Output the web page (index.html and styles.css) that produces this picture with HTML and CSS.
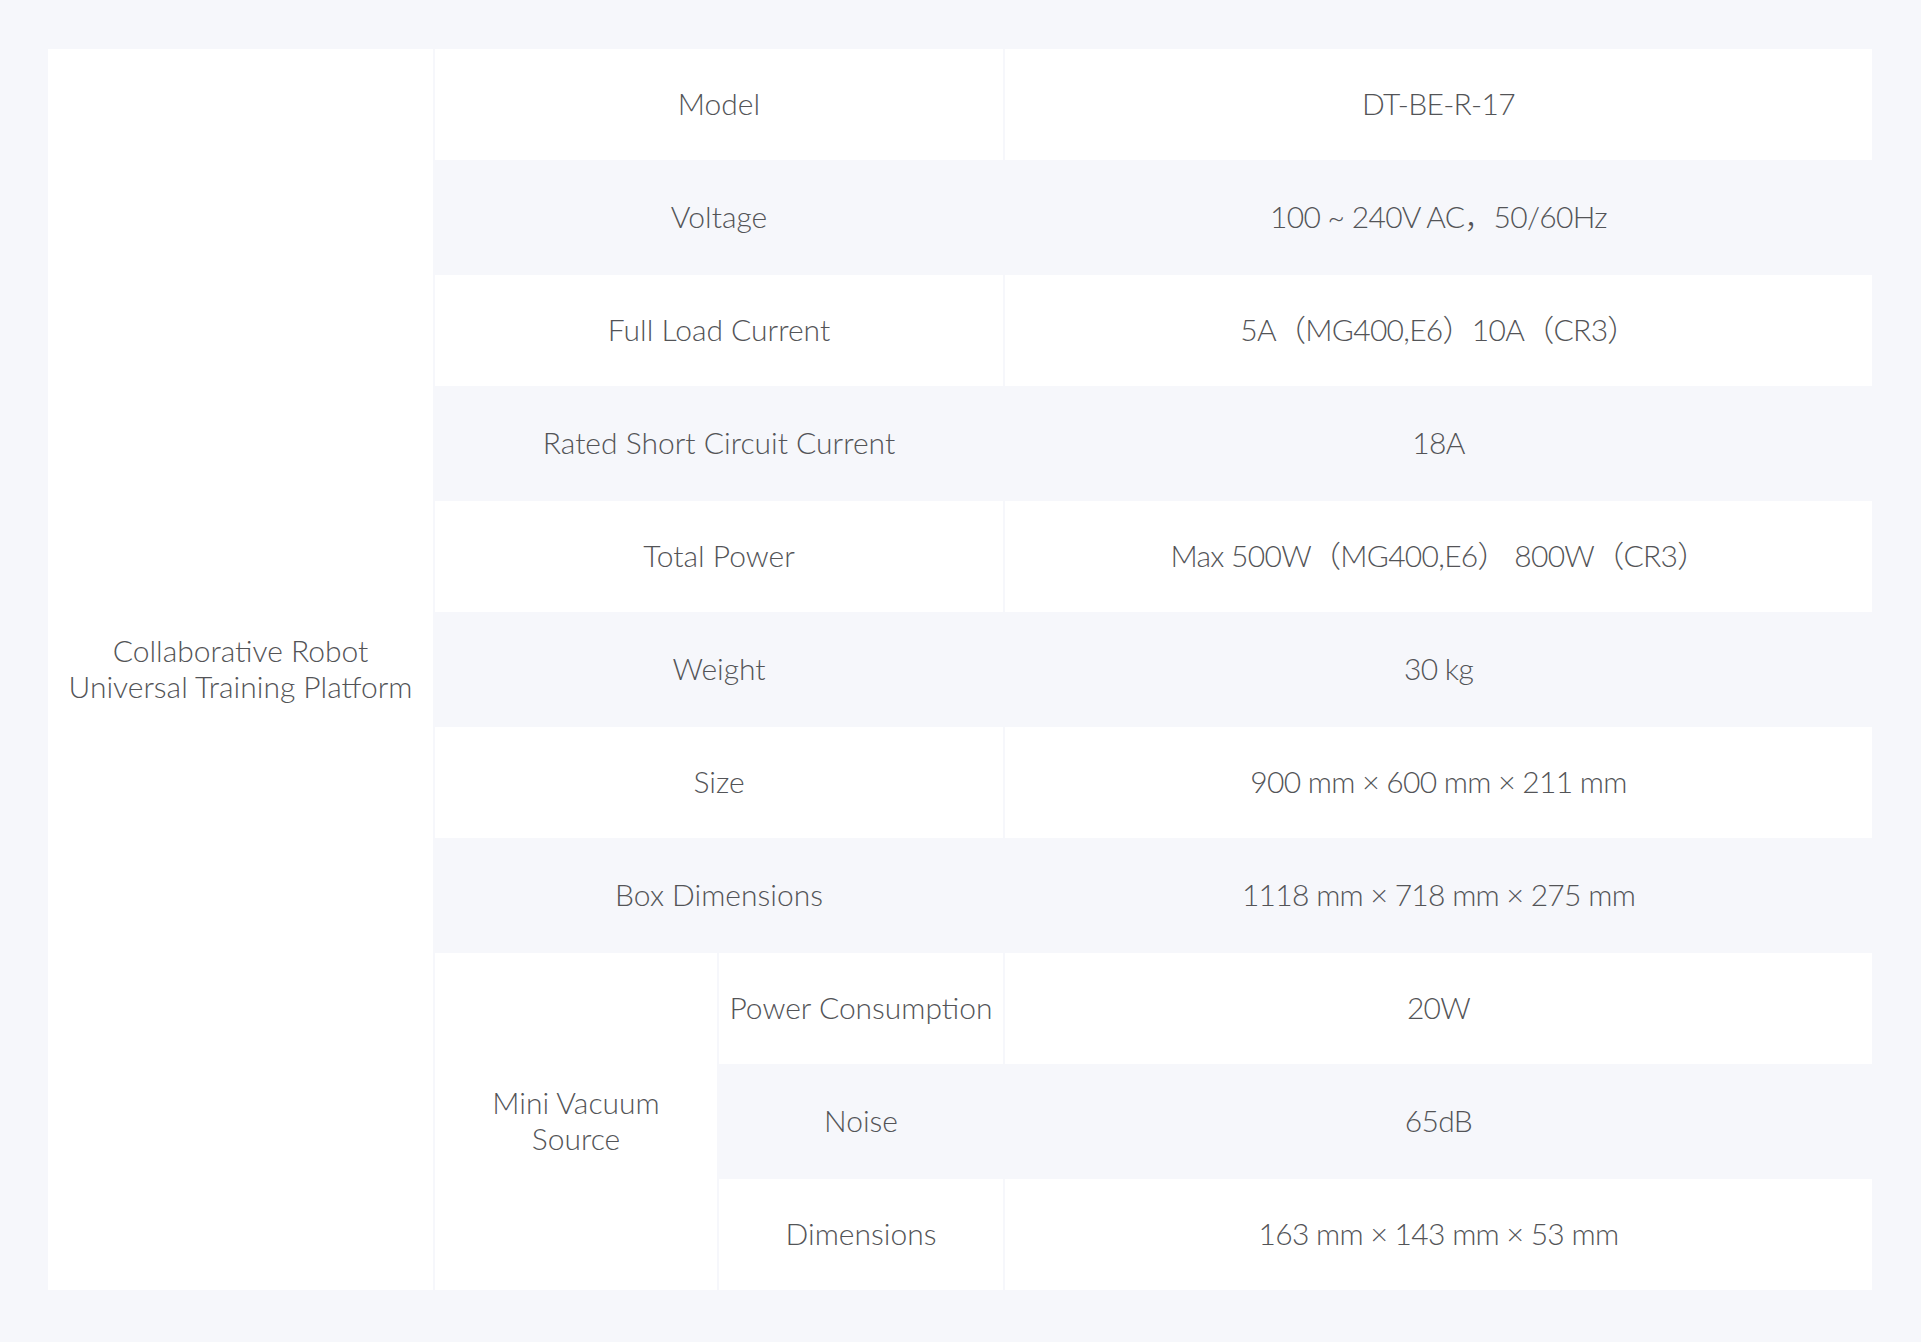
FILE: index.html
```html
<!DOCTYPE html>
<html lang="en">
<head>
<meta charset="utf-8">
<title>Specifications</title>
<link rel="stylesheet" href="styles.css">
</head>
<body>
<main class="page">
  <table class="spec">
    <colgroup>
      <col class="c-product">
      <col class="c-group">
      <col class="c-label">
      <col class="c-value">
    </colgroup>
    <tbody>
      <tr>
        <td class="cell white" rowspan="11">Collaborative Robot<br>Universal Training Platform</td>
        <td class="cell white" colspan="2">Model</td>
        <td class="cell value white">DT-BE-R-17</td>
      </tr>
      <tr>
        <td class="cell gray" colspan="2">Voltage</td>
        <td class="cell value gray">100 ~ 240V AC，50/60Hz</td>
      </tr>
      <tr>
        <td class="cell white" colspan="2">Full Load Current</td>
        <td class="cell value white">5A（MG400,E6）10A（CR3）</td>
      </tr>
      <tr>
        <td class="cell gray" colspan="2">Rated Short Circuit Current</td>
        <td class="cell value gray">18A</td>
      </tr>
      <tr>
        <td class="cell white" colspan="2">Total Power</td>
        <td class="cell value white">Max 500W（MG400,E6） 800W（CR3）</td>
      </tr>
      <tr>
        <td class="cell gray" colspan="2">Weight</td>
        <td class="cell value gray">30 kg</td>
      </tr>
      <tr>
        <td class="cell white" colspan="2">Size</td>
        <td class="cell value white">900 mm × 600 mm × 211 mm</td>
      </tr>
      <tr>
        <td class="cell gray" colspan="2">Box Dimensions</td>
        <td class="cell value gray">1118 mm × 718 mm × 275 mm</td>
      </tr>
      <tr>
        <td class="cell white" rowspan="3">Mini Vacuum<br>Source</td>
        <td class="cell white">Power Consumption</td>
        <td class="cell value white">20W</td>
      </tr>
      <tr>
        <td class="cell gray">Noise</td>
        <td class="cell value gray">65dB</td>
      </tr>
      <tr>
        <td class="cell white">Dimensions</td>
        <td class="cell value white">163 mm × 143 mm × 53 mm</td>
      </tr>
    </tbody>
  </table>
</main>
</body>
</html>
```

FILE: styles.css
```css
html, body {
  margin: 0;
  padding: 0;
}

body {
  background: #f6f7fb;
  font-family: "Lato", "Noto Sans CJK SC", sans-serif;
  font-weight: 300;
  color: #535457;
}

.page {
  padding: 47px 0 0 46px;
}

.spec {
  border-collapse: separate;
  border-spacing: 2px;
  table-layout: fixed;
  width: 1828px;
}

.c-product { width: 385px; }
.c-group { width: 282px; }
.c-label { width: 284px; }
.c-value { width: 867px; }

.cell {
  height: 108px;
  padding: 0 0 3px;
  text-align: center;
  vertical-align: middle;
  font-size: 30px;
  line-height: 36px;
  white-space: nowrap;
}

.value {
  letter-spacing: -0.7px;
}

.white { background: #ffffff; }
.gray { background: #f6f7fb; }
```
